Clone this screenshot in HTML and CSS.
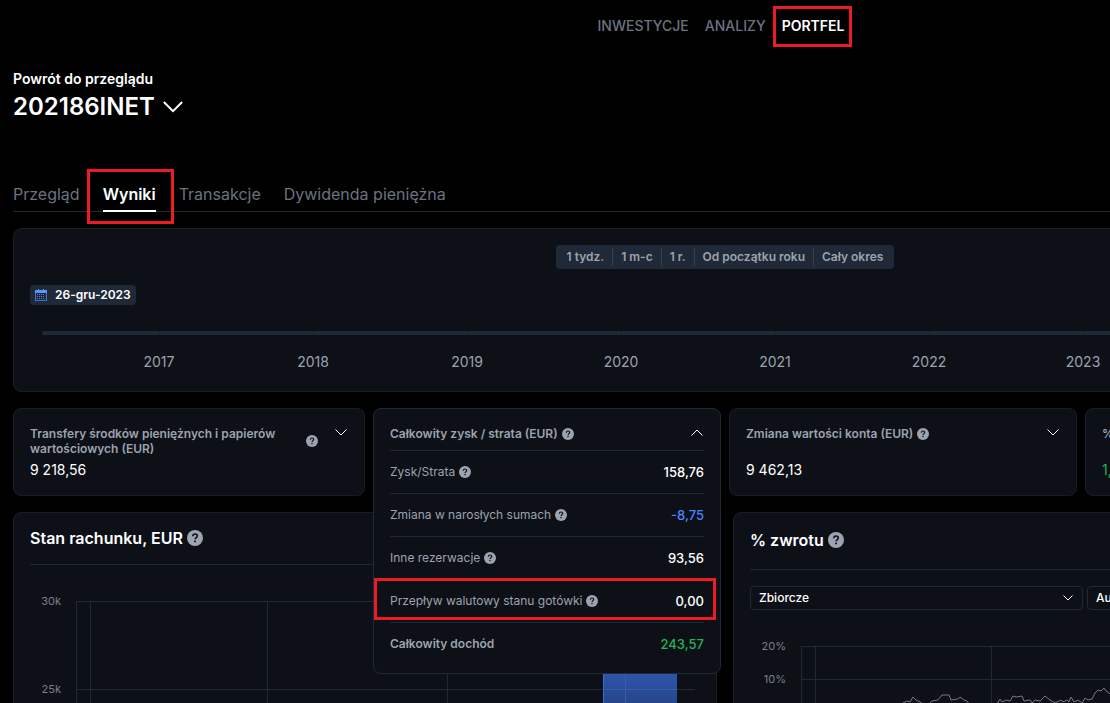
FILE: index.html
```
<!DOCTYPE html>
<html lang="pl">

<head>
	<meta charset="utf-8">
	<title>Portfel - Wyniki</title>
	<link rel="stylesheet" href="styles.css">
</head>

<body>
	<svg class="sprite" aria-hidden="true">
		<symbol id="help" viewBox="0 0 12 12">
			<circle cx="6" cy="6" r="6" fill="#9ca3b1" />
			<path d="M4.300 4.700C4.400 3.600 5.100 3 6 3s1.700.600 1.700 1.500C7.700 5.600 6.100 5.700 6.100 7" fill="none" stroke="#0d1017" stroke-width="1.2" />
			<rect x="5.400" y="7.900" width="1.300" height="1.300" fill="#0d1017" />
		</symbol>
		<symbol id="chevron" viewBox="0 0 12 7">
			<path d="M.5.5 6 6 11.500.500" fill="none" stroke="currentColor" vector-effect="non-scaling-stroke" />
		</symbol>
	</svg>

	<div class="app">
		<nav class="main-nav">
			<a href="#">INWESTYCJE</a>
			<a href="#">ANALIZY</a>
			<a href="#" class="active marked">PORTFEL</a>
		</nav>

		<header class="account">
			<a href="#" class="back">Powrót do przeglądu</a>
			<h1><button type="button">202186INET <svg class="chevron-lg"><use href="#chevron" /></svg></button></h1>
		</header>

		<nav class="tabs">
			<a href="#">Przegląd</a>
			<a href="#" class="active marked">Wyniki</a>
			<a href="#">Transakcje</a>
			<a href="#">Dywidenda pieniężna</a>
		</nav>

		<section class="card period">
			<div class="ranges">
				<button type="button">1 tydz.</button>
				<button type="button">1 m-c</button>
				<button type="button">1 r.</button>
				<button type="button">Od początku roku</button>
				<button type="button">Cały okres</button>
			</div>
			<button type="button" class="date">
				<svg width="12" height="12" viewBox="0 0 12 12">
					<path d="M0 1h12v11H0z" fill="#3f6fd0" />
					<path d="M1 4h10v7H1z" fill="#1f2937" />
					<path d="M0 1h12v3H0zM3 0h1v2H3zM8 0h1v2H8z" fill="#5b92ff" />
					<path d="M2 5.500h8M2 7.500h8M2 9.500h8" stroke="#4f7fe0" stroke-dasharray="1 1" />
				</svg>
				26-gru-2023
			</button>
			<div class="track"></div>
			<ol class="years">
				<li>2017</li>
				<li>2018</li>
				<li>2019</li>
				<li>2020</li>
				<li>2021</li>
				<li>2022</li>
				<li>2023</li>
				<li>2024</li>
			</ol>
		</section>

		<div class="summary">
			<section class="card tile">
				<div class="tile-head">
					<h2>Transfery środków pieniężnych i papierów wartościowych (EUR)</h2>
					<svg class="help"><use href="#help" /></svg>
					<button type="button" class="toggle" aria-label="Rozwiń"><svg><use href="#chevron" /></svg></button>
				</div>
				<p class="amount">9 218,56</p>
			</section>

			<div class="slot">
				<section class="card tile open">
					<div class="tile-head">
						<h2>Całkowity zysk / strata (EUR)</h2>
						<svg class="help"><use href="#help" /></svg>
						<button type="button" class="toggle up" aria-label="Zwiń"><svg><use href="#chevron" /></svg></button>
					</div>
					<dl>
						<div>
							<dt>Zysk/Strata <svg class="help"><use href="#help" /></svg></dt>
							<dd>158,76</dd>
						</div>
						<div>
							<dt>Zmiana w narosłych sumach <svg class="help"><use href="#help" /></svg></dt>
							<dd class="negative">-8,75</dd>
						</div>
						<div>
							<dt>Inne rezerwacje <svg class="help"><use href="#help" /></svg></dt>
							<dd>93,56</dd>
						</div>
						<div class="marked">
							<dt>Przepływ walutowy stanu gotówki <svg class="help"><use href="#help" /></svg></dt>
							<dd>0,00</dd>
						</div>
						<div class="total">
							<dt>Całkowity dochód</dt>
							<dd class="positive">243,57</dd>
						</div>
					</dl>
				</section>
			</div>

			<section class="card tile single">
				<div class="tile-head">
					<h2>Zmiana wartości konta (EUR)</h2>
					<svg class="help"><use href="#help" /></svg>
					<button type="button" class="toggle" aria-label="Rozwiń"><svg><use href="#chevron" /></svg></button>
				</div>
				<p class="amount">9 462,13</p>
			</section>

			<section class="card tile single">
				<div class="tile-head">
					<h2>% zwrotu</h2>
				</div>
				<p class="amount positive">1,72%</p>
			</section>
		</div>

		<div class="charts">
			<section class="card chart">
				<h2>Stan rachunku, EUR <svg><use href="#help" /></svg></h2>
				<svg class="plot balance" width="670" height="140">
					<defs>
						<linearGradient id="bar" x2="0" y2="1">
							<stop offset="0" stop-color="#325cb8" />
							<stop offset="1" stop-color="#1f3870" />
						</linearGradient>
					</defs>
					<path class="grid" d="M46 11.500h619M46 99.500h619M46.500 11v129M60.500 11v129M237.500 11v129M417.500 11v129M595.500 11v129" />
					<rect x="573" y="70" width="74" height="70" fill="url(#bar)" />
					<path d="M573.500 70v70" stroke="#3b6be0" />
					<path d="M573 99.500h74M595.500 70v70" stroke="#3a5cac" />
					<text x="31" y="15">30k</text>
					<text x="31" y="103">25k</text>
				</svg>
			</section>

			<section class="card chart returns">
				<h2>% zwrotu <svg><use href="#help" /></svg></h2>
				<div class="filters">
					<select aria-label="Rodzaj zwrotu">
						<option>Zbiorcze</option>
					</select>
					<select aria-label="Skala">
						<option>Automatyczna</option>
					</select>
				</div>
				<svg class="plot" width="670" height="100">
					<path class="grid" d="M51 10.500h619M51 43.500h619M51.500 10v90M65.500 10v90M241.500 10v90M417.500 10v90" />
					<polyline class="line" points="151,68 157,65 160,66 163,61 166,64 170,66 173,68" />
					<polyline class="line" points="180,67 182,65 188,64 192,59 199,59 201,64 208,63 210,61 214,64 217,65 219,68" />
					<polyline class="line" points="247,68 250,63 252,66 256,64 260,65 263,60 266,61 272,60 274,65 280,64 282,67 285,64 290,65 295,60 300,64 305,67 311,64 313,66 317,64 319,66 321,61 324,66 328,64 332,67 335,62 338,64 342,63 345,57 348,54 351,55 354,52 356,55 360,58 366,55" />
					<text x="36" y="14">20%</text>
					<text x="36" y="47">10%</text>
				</svg>
			</section>
		</div>
	</div>
</body>

</html>
```
FILE: styles.css
```
* {
	box-sizing: border-box;
}

body {
	background-color: #000;
	color: #fff;
	font-family: Inter, "Liberation Sans", sans-serif;
	font-size: 14px;
	margin: 0;
}

h1, h2, p, ol, dl, dd {
	margin: 0;
	padding: 0;
}

a {
	color: #6b7280;
	text-decoration: none;
}

button {
	background: none;
	border: none;
	color: inherit;
	font: inherit;
	padding: 0;
}

.sprite {
	display: none;
}

.app {
	height: 100vh;
	overflow: hidden;
	padding-left: 13px;
}

.app > * {
	min-width: 1424px;
}

.main-nav {
	display: flex;
	gap: 16px;
	justify-content: center;
	line-height: 20px;
	padding: 16px 8px 0 0;
	font-weight: 500;
}

.main-nav .active {
	color: #fff;
	font-weight: 600;
}

.marked {
	position: relative;
}

.marked::after {
	border: 3px solid #ed1c24;
	content: "";
	inset: -10px -8px -11px -9px;
	position: absolute;
}

.account {
	padding-top: 34px;
}

.back {
	color: #fff;
	display: block;
	font-size: 14px;
	font-weight: 600;
	line-height: 18px;
}

.account h1 {
	font-size: 24px;
	font-weight: 600;
	line-height: 38px;
}

.account button {
	align-items: center;
	display: flex;
	gap: 8px;
}

.chevron-lg {
	height: 12px;
	stroke-width: 2px;
	width: 20px;
}

.tabs {
	border-bottom: 1px solid #1f2937;
	display: flex;
	font-size: 16px;
	gap: 23px;
	line-height: 24px;
	margin-top: 56px;
}

.tabs a {
	padding-bottom: 5px;
}

.tabs .active {
	box-shadow: 0 1px #fff, inset 0 -1px #fff;
	color: #fff;
	font-weight: 600;
}

.tabs .marked::after {
	inset: -13px -18px -13px -16px;
}

.card {
	background-color: #0d1017;
	border: 1px solid #161c28;
	border-radius: 8px;
}

.period {
	margin-top: 16px;
	padding: 16px 16px 19px;
}

.ranges {
	background-color: #1f2937;
	border-radius: 4px;
	color: #9ca3af;
	display: flex;
	font-size: 12px;
	font-weight: 600;
	margin: 0 auto;
	padding: 3px;
	width: fit-content;
}

.ranges button {
	line-height: 18px;
	padding: 0 8px;
}

.ranges button + button {
	border-left: 1px solid #374151;
}

.date {
	align-items: center;
	background-color: #1f2937;
	border-radius: 4px;
	display: flex;
	font-size: 12px;
	font-weight: 600;
	gap: 8px;
	line-height: 20px;
	margin-top: 16px;
	padding: 0 5px;
}

.track {
	background: repeating-linear-gradient(to right, #1f2937 0 117px, #18202c 117px 118px, #1f2937 118px 154px);
	border-radius: 2px;
	height: 4px;
	margin: 26px 12px 0;
}

.years {
	color: #9ca3af;
	display: flex;
	line-height: 20px;
	list-style: none;
	margin-top: 17px;
	padding-left: 52px;
}

.years li {
	flex: 0 0 154px;
	text-align: center;
}

.summary {
	display: grid;
	gap: 8px;
	grid-template-columns: 352px repeat(3, 1fr);
	margin-top: 16px;
	padding-right: 4px;
}

.tile {
	padding: 17px 16px 15px;
}

.tile-head {
	align-items: center;
	color: #9ca3af;
	display: flex;
	gap: 4px;
	line-height: 15px;
}

.tile-head h2 {
	font-size: 12px;
	font-weight: 600;
	max-width: 272px;
}

.help {
	flex: none;
	height: 12px;
	width: 12px;
}

.toggle {
	align-self: flex-start;
	color: #fff;
	display: flex;
	height: 15px;
	margin-left: auto;
	margin-right: 1px;
	padding-top: 3px;
}

.toggle svg {
	height: 7px;
	width: 12px;
}

.toggle.up svg {
	transform: rotate(180deg);
}

.amount {
	line-height: 20px;
	margin-top: 4px;
}

.single .amount {
	margin-top: 19px;
}

.slot {
	position: relative;
}

.open {
	border-color: #1f2937;
	left: 0;
	padding-bottom: 8px;
	position: absolute;
	right: 0;
	top: 0;
	z-index: 1;
}

.open dl {
	margin-top: 9px;
}

.open dl div {
	align-items: center;
	border-top: 1px solid #1f2937;
	display: flex;
	justify-content: space-between;
	line-height: 42px;
}

.open dt {
	align-items: center;
	color: #9ca3af;
	display: flex;
	font-size: 12px;
	gap: 4px;
}

.open dd {
	font-size: 13px;
	font-weight: 500;
}

.open .total dt {
	font-weight: 600;
}

.open .marked::after {
	inset: -2px -12px 2px -16px;
}

.negative {
	color: #4c82fb;
}

.positive {
	color: #22b455;
}

.charts {
	display: grid;
	gap: 16px;
	grid-template-columns: 1fr 1fr;
	margin-top: 16px;
}

.chart {
	padding: 13px 16px;
}

.chart h2 {
	align-items: center;
	border-bottom: 1px solid #1f2937;
	display: flex;
	font-size: 16px;
	font-weight: 600;
	gap: 4px;
	line-height: 24px;
	padding-bottom: 14px;
}

.chart h2 svg {
	height: 16px;
	width: 16px;
}

.returns {
	padding-top: 15px;
}

.returns h2 {
	padding-bottom: 17px;
}

.filters {
	display: grid;
	gap: 4px;
	grid-template-columns: 1fr 1fr;
	margin-top: 16px;
}

.filters select {
	appearance: none;
	background: url("data:image/svg+xml,%3Csvg xmlns='http://www.w3.org/2000/svg' width='10' height='6'%3E%3Cpath d='M.5.5 5 5 9.5.5' fill='none' stroke='%23fff'/%3E%3C/svg%3E") no-repeat right 9px center;
	border: 1px solid #1f2937;
	border-radius: 4px;
	color: #fff;
	font: 500 12px/18px Inter, "Liberation Sans", sans-serif;
	height: 24px;
	padding: 0 8px;
}

.plot {
	display: block;
	margin-top: 26px;
}

.balance {
	margin-top: 25px;
}

.plot text {
	fill: #7c7f86;
	font-size: 11px;
	text-anchor: end;
}

.grid {
	fill: none;
	stroke: #1f2937;
}

.line {
	fill: none;
	stroke: #77797e;
}
```
